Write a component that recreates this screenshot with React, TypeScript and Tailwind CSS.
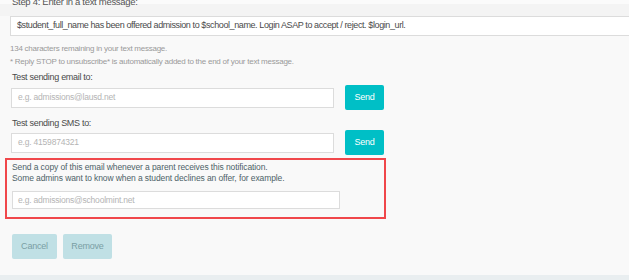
export default function App() {
  return (
    <div className="w-[629px] h-[280px] overflow-hidden bg-[#f9f9f9] font-['Liberation_Sans',Arial,sans-serif] flex flex-col">
      {/* Step 4 header, cut off at the top */}
      <div className="bg-[#f4f4f4] h-[16px] pl-[12px] relative">
        <div className="h-[4px] bg-[#fbfbfb] -mx-[12px]" />
        <p className="absolute left-[12px] top-[-4px] text-[9.5px] leading-[11px] tracking-[-0.3px] text-[#555]">Step 4: Enter in a text message:</p>
      </div>
      <div className="pl-[10px]">
        <div className="w-[640px] h-[20px] bg-white border border-[#dcdcdc] flex items-center pl-[6px] text-[9px] tracking-[-0.4px] text-[#4a4a4a] whitespace-nowrap">
          $student_full_name has been offered admission to $school_name. Login ASAP to accept / reject. $login_url.
        </div>
      </div>

      <div className="pl-[10px] pt-[6px] text-[8px] leading-[13px] tracking-[-0.25px] text-[#999]">
        <p>134 characters remaining in your text message.</p>
        <p>* Reply STOP to unsubscribe* is automatically added to the end of your text message.</p>
      </div>

      <p className="pl-[12px] pt-[3px] text-[9px] leading-[13px] tracking-[-0.3px] text-[#4a4a4a]">Test sending email to:</p>
      <div className="flex items-center pl-[11px] pt-[1px] gap-[11px]">
        <div className="w-[323px] h-[20px] bg-white border border-[#dcdcdc] flex items-center pl-[6px] text-[8.5px] tracking-[-0.2px] text-[#b4b4b4]">e.g. admissions@lausd.net</div>
        <button className="w-[39px] h-[25px] rounded-[2px] bg-[#00bfc6] text-white text-[9px] tracking-[-0.2px]">Send</button>
      </div>

      <p className="pl-[12px] pt-[7px] text-[9px] leading-[13px] tracking-[-0.3px] text-[#4a4a4a]">Test sending SMS to:</p>
      <div className="flex items-center pl-[11px] gap-[11px]">
        <div className="w-[323px] h-[20px] bg-white border border-[#dcdcdc] flex items-center pl-[6px] text-[8.5px] tracking-[-0.2px] text-[#b4b4b4]">e.g. 4159874321</div>
        <button className="w-[39px] h-[25px] rounded-[2px] bg-[#00bfc6] text-white text-[9px] tracking-[-0.2px]">Send</button>
      </div>

      <div className="ml-[5px] mt-[3px] w-[381px] h-[61px] border-2 border-[#f0474b] pl-[5px] pt-[2px]">
        <p className="text-[8.5px] leading-[11px] tracking-[-0.1px] text-[#4d6268]">Send a copy of this email whenever a parent receives this notification.</p>
        <p className="text-[8.5px] leading-[11px] tracking-[-0.1px] text-[#4d6268]">Some admins want to know when a student declines an offer, for example.</p>
        <div className="mt-[7px] w-[328px] h-[18px] bg-white border border-[#dcdcdc] flex items-center pl-[5px] text-[8.5px] tracking-[-0.2px] text-[#b4b4b4]">e.g. admissions@schoolmint.net</div>
      </div>

      <div className="flex gap-[6px] pl-[12px] pt-[15px]">
        <button className="w-[45px] h-[25px] rounded-[2px] bg-[#c0e0e5] text-[#7a9ea4] text-[9px] tracking-[-0.2px]">Cancel</button>
        <button className="w-[49px] h-[25px] rounded-[2px] bg-[#c0e0e5] text-[#7a9ea4] text-[9px] tracking-[-0.2px]">Remove</button>
      </div>

      <div className="mt-auto h-[5px] bg-[#e9eef0]" />
    </div>
  );
}
